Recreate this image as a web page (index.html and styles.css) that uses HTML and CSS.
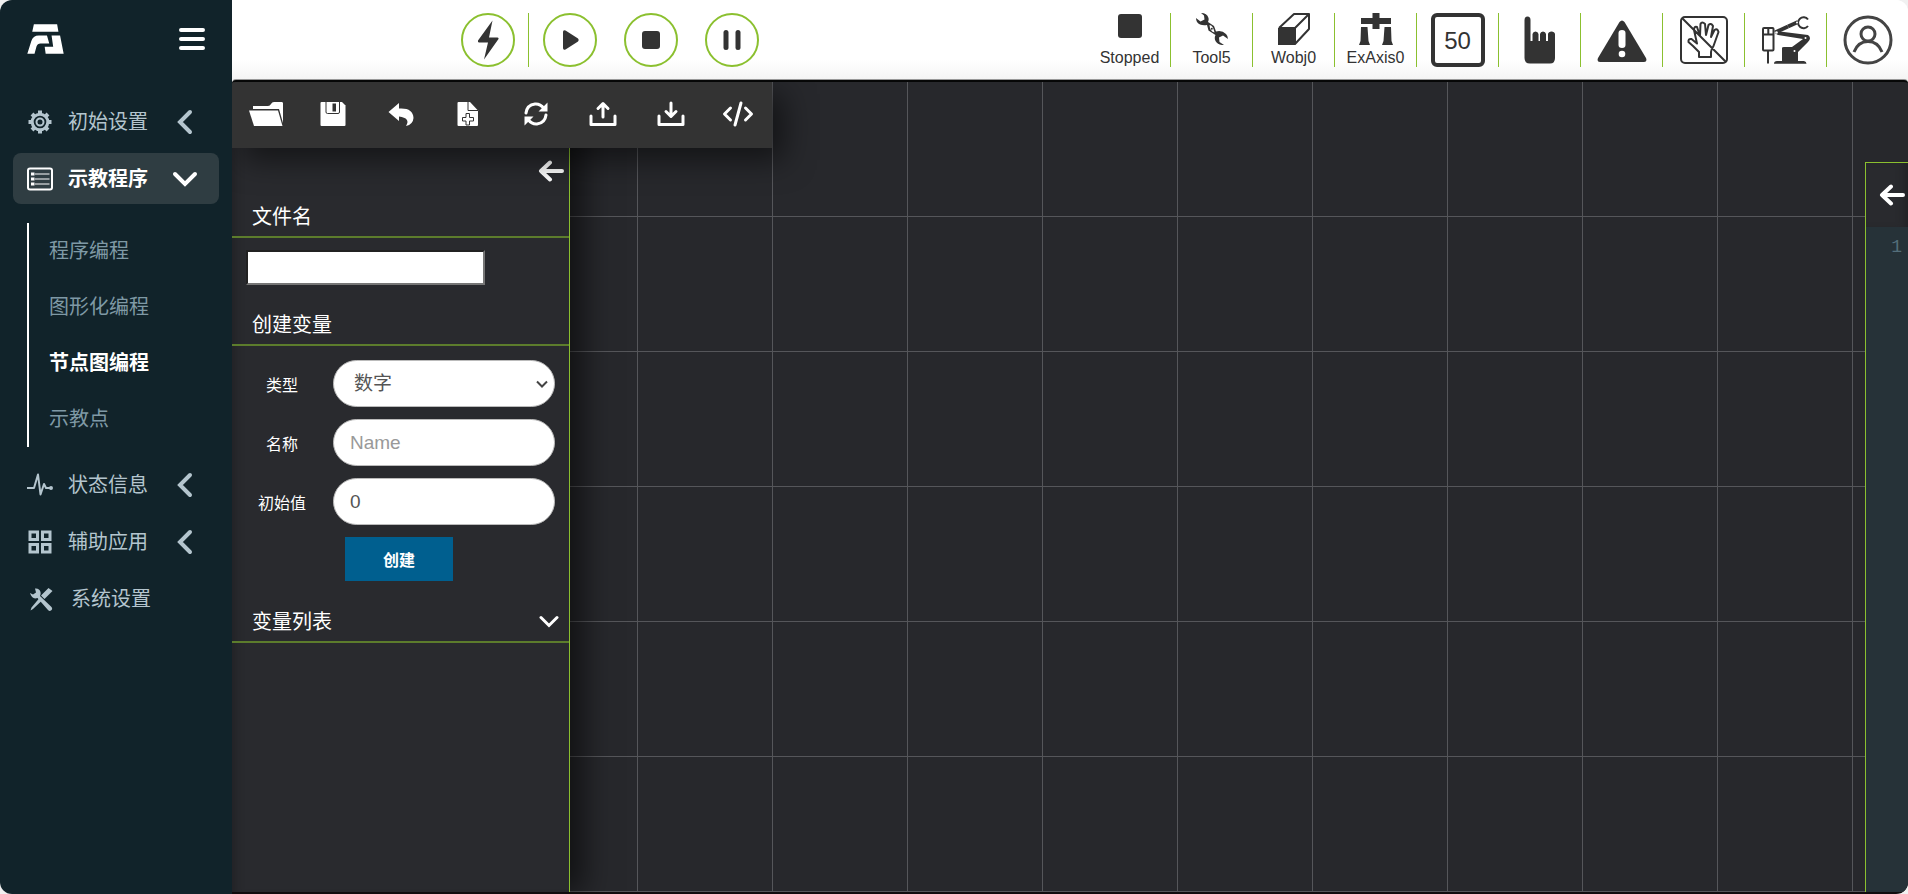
FILE: index.html
```html
<!DOCTYPE html>
<html lang="zh-CN">
<head>
<meta charset="utf-8">
<title>节点图编程</title>
<link rel="stylesheet" href="styles.css">
</head>
<body>
<div class="app">
  <aside class="sidebar">
    <div class="brand">
      <svg class="logo" viewBox="80 72 113 90"><path d="M101 72H172L176 95H96ZM81 162L93 124Q98 106 116 106H141L148 131H121Q112 131 109 140L103 162ZM155 106H181L192 162H137L134 141H160Z"/></svg>
      <button class="menu-toggle" aria-label="菜单"><svg viewBox="0 0 26 22"><path d="M2 2H24M2 11H24M2 20H24"/></svg></button>
    </div>
    <nav class="nav">
      <a class="item" href="#">
        <svg class="item-icon" viewBox="0 0 26 26"><circle class="rim" cx="13" cy="13" r="7.800"/><circle cx="13" cy="13" r="3.500"/><path class="teeth" d="M13 1.500V5M13 21V24.500M1.500 13H5M21 13H24.500M5 5L7.400 7.400M18.600 18.600L21 21M5 21L7.400 18.600M18.600 7.400L21 5"/></svg>
        <span>初始设置</span><svg class="chev" viewBox="0 0 26 26"><path d="M18 3L8 13L18 23"/></svg></a>
      <a class="item active" href="#">
        <svg class="item-icon" viewBox="0 0 26 26"><rect x="1" y="2.500" width="24" height="21" rx="2"/><path class="thin" d="M8 8H22.500M8 13H22.500M8 18H22.500"/><path class="dots" d="M4 8H7.500M4 13H7.500M4 18H7.500"/></svg>
        <span>示教程序</span><svg class="chev" viewBox="0 0 26 26"><path d="M3 8L13 18L23 8"/></svg></a>
      <div class="subnav">
        <a href="#">程序编程</a><a href="#">图形化编程</a><a class="current" href="#">节点图编程</a><a href="#">示教点</a>
      </div>
      <a class="item" href="#">
        <svg class="item-icon" viewBox="0 0 26 26"><path class="pulse" d="M0 16H7L11 2.500L13.500 22.500L17 12L19 16H23"/><circle cx="24" cy="16" r="1"/></svg>
        <span>状态信息</span><svg class="chev" viewBox="0 0 26 26"><path d="M18 3L8 13L18 23"/></svg></a>
      <a class="item" href="#">
        <svg class="item-icon bold" viewBox="0 0 26 26"><path d="M3 3H10.500V10.500H3ZM15.500 3H23V10.500H15.500ZM3 15.500H10.500V23H3ZM15.500 15.500H23V23H15.500Z"/></svg>
        <span>辅助应用</span><svg class="chev" viewBox="0 0 26 26"><path d="M18 3L8 13L18 23"/></svg></a>
      <a class="item" href="#">
        <svg class="item-icon solid" viewBox="0 0 26 26"><path d="M3 7L6 8.500L9 6.500L8 2.500Q12.500 2 13.500 6Q14 8 13 10L24.500 21Q26 23 24 24.500Q22.500 25.500 21 24L10.500 12Q5 14 3 7Z"/><path d="M21.500 2L25.500 5L17.500 13L14 9.500ZM12 12.500L14.500 15L6 23L3.500 24.500L4.500 21.500Z"/></svg>
        <span class="shift">系统设置</span></a>
    </nav>
  </aside>
  <main class="main">
    <header class="topbar">
      <div class="run">
        <div class="power"><button class="round" aria-label="使能"><svg width="24" height="40" viewBox="0 0 24 40"><path d="M16.500 .5L2 20.500Q1.500 22.500 3 22.500H12L8 39.500L22.500 19Q23 17.500 21.500 17.500H13Z"/></svg></button></div>
        <button class="round" aria-label="运行"><svg width="20" height="22" viewBox="0 0 20 22"><path d="M3 3Q3 .5 5.500 1.500L18 9.500Q19.500 11 18 12.500L5.500 20.500Q3 21.500 3 19Z"/></svg></button>
        <button class="round" aria-label="停止"><svg width="18" height="18" viewBox="0 0 18 18"><rect width="18" height="18" rx="3"/></svg></button>
        <button class="round" aria-label="暂停"><svg width="18" height="20" viewBox="0 0 18 20"><rect x="0.500" width="5" height="20" rx="2.500"/><rect x="12.500" width="5" height="20" rx="2.500"/></svg></button>
      </div>
      <div class="status">
        <button class="cell"><svg width="32" height="32" viewBox="0 0 32 32"><rect x="4" y="1" width="24" height="24" rx="3"/></svg><span>Stopped</span></button>
        <button class="cell"><svg width="32" height="32" viewBox="0 0 32 32"><path d="M5 0Q11 0 12.500 5Q13 7 12 9L18 13L20 18.500Q26 17 30 21Q32 23 32 26L27 22.500L23 24.500L23.500 29L28 32Q22 32.500 19.500 28Q18 25 19.500 22L12.500 17.500L11 12Q4 13 1 9Q0 7 0 5L4.500 8.500L8.500 6.500L8 2.500Z"/><path class="paper" d="M13.500 12Q17 12 18.500 19.500Q14 19 13.500 12Z"/><circle cx="15.800" cy="15.800" r="1"/></svg><span>Tool5</span></button>
        <button class="cell"><svg width="32" height="32" viewBox="0 0 32 32"><path d="M0 15H17V32H0Z"/><path class="line" d="M1 15L16 1H31L17 15H1M31 1V16L17 31V15"/></svg><span>Wobj0</span></button>
        <button class="cell"><svg width="34" height="32" viewBox="0 0 34 32"><path d="M2 5H13.500V0H20.500V5H32V11H20.500V16H13.500V11H2ZM2 14H8.500L9.500 28L11 32H0L1.500 28ZM25.500 14H32L32.500 28L34 32H23L24.500 28Z"/></svg><span>ExAxis0</span></button>
        <button class="cell"><b class="speed">50</b></button>
        <button class="cell" aria-label="拖动"><svg width="32" height="48" viewBox="0 0 32 48"><path d="M.5 4Q.5 .5 3.500 .5T6.500 4V25H8.500V18Q9 15.500 11.500 15.500T14.500 18V25H16V18Q16.500 15.500 19 15.500T22 18V25H24V18Q24.500 15.500 27.500 15.500T31 18V42Q31 47.500 26 47.500H6Q.5 47.500 .5 42Z"/></svg></button>
        <button class="cell" aria-label="警告"><svg class="warning" width="50" height="42" viewBox="0 0 50 42"><path d="M22.500 2Q25-1 27.500 2L49 38Q50.500 42 47 42H3Q-.5 42 1 38Z"/><path class="paper" d="M21.500 13Q21.500 10 25 10T28.500 13V25Q28.500 28 25 28T21.500 25Z"/><circle class="paper" cx="25" cy="34" r="3.300"/></svg></button>
        <button class="cell" aria-label="手动"><svg width="50" height="50" viewBox="0 0 50 50"><rect class="line" x="2" y="2" width="46" height="46" rx="4"/><path class="line" d="M3 3L47 47M20 42V37L14 31L9.500 27Q9 23.500 12.500 24L18 28.500L15 15Q15 11 18 12L21 21L21.500 9Q23 6 26 9L27 20L29.500 10Q32 7.500 34 11L32 22L35.500 15Q38.500 13 39.500 17L34.500 31Q32 35 32 37V42Z"/></svg></button>
        <button class="cell" aria-label="机器人"><svg width="50" height="50" viewBox="-1 -1 50 50"><rect class="line" x="1" y="12" width="10.500" height="22.500" rx="1"/><path class="line" d="M1 18.500H11.500M6.300 12V18.500M6 34.500V47.500M46 3.500A5.500 5.500 0 1 0 46 10"/><path d="M20 32Q20 31 22 31H30L41 23L16 19Q13 18 14 15L46 19Q50 22 46 26L36 36V45H42Q44.500 45.500 44.500 47.700H12Q12 45 15 45H20Z"/><path class="heavy" d="M13 16.500L26 10.500"/><path class="heavy" d="M26 10.500L36 6"/><circle class="paper" cx="35" cy="6.500" r="1"/><circle class="paper" cx="43.500" cy="22" r="1"/><circle class="paper" cx="32.500" cy="35" r="1"/><circle class="paper" cx="14.500" cy="16.500" r="1.300"/></svg></button>
        <button class="cell" aria-label="用户"><svg width="50" height="50" viewBox="0 0 50 50"><g class="user"><circle cx="25" cy="25" r="23"/><circle cx="25" cy="19" r="7"/><path d="M11 37Q15 26.500 25 26.500T39 37"/></g></svg></button>
      </div>
    </header>
    <section class="canvas">
      <div class="panel">
        <div class="panel-head"><button class="arrow" aria-label="收起"><svg viewBox="0 0 26 22"><path d="M24 11H4M12 2.500L3 11L12 19.500"/></svg></button></div>
        <h2><label for="file">文件名</label></h2>
        <div class="file"><input id="file" type="text"></div>
        <h2>创建变量</h2>
        <form class="form">
          <label for="type">类型</label>
          <div class="pick"><select id="type" class="field"><option>数字</option></select><svg viewBox="0 0 12 8"><path d="M1 1.500L6 6.500L11 1.500"/></svg></div>
          <label for="name">名称</label><input id="name" class="field" type="text" placeholder="Name">
          <label for="value">初始值</label><input id="value" class="field" type="text" value="0">
          <button type="button" class="create">创建</button>
        </form>
        <h2>变量列表<button class="fold" aria-label="展开"><svg viewBox="0 0 20 14"><path d="M2 2.500L10 10.500L18 2.500"/></svg></button></h2>
      </div>
      <div class="toolbar">
        <button aria-label="打开"><svg width="36" height="26" viewBox="0 0 36 26"><path d="M5 9V5H20Q22 5 23 3Q24 1 26 1H34Q35 1 35 2.500V22L31 8H5Z"/><path d="M1 9.500H30L34.500 25H6Z"/></svg></button>
        <button aria-label="保存"><svg width="26" height="26" viewBox="0 0 26 26"><path d="M.5 2Q.5 1 1.500 1H22L25.500 4.500V24Q25.500 25 24.500 25H1.500Q.5 25 .5 24Z"/><path class="cut" d="M6 1V11Q6 12.500 7.500 12.500H18Q19.500 12.500 19.500 11V1"/><path class="hole" d="M12.500 2.500H16V10.500H12.500Z"/></svg></button>
        <button aria-label="撤销"><svg width="26" height="26" viewBox="0 0 26 26"><path d="M.5 11L11 2V7.500Q25 6.500 25.500 17Q25 23.500 18 25Q23 17 11 15.500V20Z"/></svg></button>
        <button aria-label="新建"><svg width="22" height="26" viewBox="0 0 22 26"><path d="M.5 2Q.5 1 1.500 1H13L21 9.500V24Q21 25 20 25H1.500Q.5 25 .5 24Z"/><path class="cut" d="M11 1V9.500H21M9 12.500H12.500V16.500H16.500V20H12.500V24H9V20H5.500V16.500H9Z"/></svg></button>
        <button aria-label="刷新"><svg width="26" height="26" viewBox="0 0 26 26"><path class="stroke" d="M3 12Q4 4 12 3Q17 2.500 21 7.500M23 14Q22 22 14 23Q9 23.500 5 18.500"/><path d="M24.500 1.500V10.500H15.500ZM1.500 24.500V15.500H10.500Z"/></svg></button>
        <button aria-label="上传"><svg width="28" height="26" viewBox="0 0 28 26"><path class="stroke" d="M2 15V23.500H26V15M14 16V4M9 7.500L14 2.500L19 7.500"/></svg></button>
        <button aria-label="下载"><svg width="28" height="26" viewBox="0 0 28 26"><path class="stroke" d="M2 15V23.500H26V15M14 2V14M9 10.500L14 15.500L19 10.500"/></svg></button>
        <button aria-label="代码"><svg width="32" height="26" viewBox="0 0 32 26"><path class="stroke" d="M8.500 7L2.500 13L8.500 19M23.500 7L29.500 13L23.500 19M19 2L13 24"/></svg></button>
      </div>
      <div class="code">
        <div class="code-head"><button class="arrow" aria-label="展开代码"><svg viewBox="0 0 26 22"><path d="M24 11H4M12 2.500L3 11L12 19.500"/></svg></button></div>
        <div class="code-body">1</div>
      </div>
    </section>
  </main>
</div>
</body>
</html>
```

FILE: styles.css
```css
* { box-sizing: border-box; }
body { margin: 0; background: #f1f1f1; font-family: "Liberation Sans", "Noto Sans CJK SC", sans-serif; }
button { padding: 0; border: 0; background: none; font: inherit; color: inherit; }
svg { display: block; flex: none; }
a { color: inherit; text-decoration: none; }
.app { display: flex; height: 100vh; border-radius: 12px; overflow: hidden; background: #fff; }

.sidebar { width: 232px; flex: none; background: #11232a; color: #b4c5ce; font-size: 20px; }
.brand { display: flex; justify-content: space-between; align-items: center; height: 78px; padding: 0 27px; }
.logo { width: 37px; height: 30px; fill: #fff; }
.menu-toggle svg { width: 26px; height: 22px; stroke: #fff; stroke-width: 4; stroke-linecap: round; }
.nav { display: flex; flex-direction: column; gap: 6px; padding: 18px 13px; }
.item { display: flex; align-items: center; height: 51px; padding: 0 21px 0 14px; border-radius: 8px; }
.item span { flex: 1; padding-left: 15px; line-height: 28px; white-space: nowrap; }
.item .shift { padding-left: 18px; }
.item-icon { width: 26px; height: 26px; fill: none; stroke: currentColor; stroke-width: 2; }
.item-icon .rim { stroke-width: 3; }
.item-icon .teeth { stroke-width: 4; }
.item-icon .thin { stroke-width: 1; }
.item-icon .dots { stroke-width: 3; }
.item-icon .pulse { stroke-width: 2; stroke-linejoin: round; }
.item-icon.bold { stroke-width: 3; }
.item-icon.solid { fill: currentColor; stroke: none; }
.chev { width: 26px; height: 26px; fill: none; stroke: currentColor; stroke-width: 4; stroke-linecap: round; }
.active { background: #2f3d42; color: #fff; font-weight: bold; }
.subnav { display: flex; flex-direction: column; margin: 13px 0 6px 14px; border-left: 2px solid #fff; color: #7f99a5; }
.subnav a { padding-left: 20px; height: 56px; line-height: 56px; }
.subnav .current { color: #fff; font-weight: bold; }

.main { flex: 1; min-width: 0; display: flex; flex-direction: column; }
.topbar { display: flex; justify-content: space-between; align-items: center; height: 80px; padding-left: 229px; background: linear-gradient(#fff 60px, #f4f4f4); color: #333; }
.topbar svg { fill: #333; }
.topbar .line { fill: none; stroke: #333; stroke-width: 2; stroke-linejoin: round; }
.topbar .heavy { stroke: #333; stroke-width: 4; }
.topbar .paper { fill: #fff; }
.topbar .user { fill: none; stroke: #444; stroke-width: 3; }
.run { display: flex; gap: 27px; }
.power { padding-right: 13px; margin-right: -13px; border-right: 1px solid #8bc02f; }
.round { display: flex; align-items: center; justify-content: center; width: 54px; height: 54px; border: 2px solid #8bc02f; border-radius: 50%; background: #fff; }
.status { display: flex; }
.cell { display: flex; flex-direction: column; align-items: center; justify-content: center; width: 82px; height: 54px; border-right: 1px solid #8bc02f; font-size: 16px; line-height: 18px; }
.cell span { padding-top: 4px; }
.cell:last-child { width: 81px; border: 0; }
.warning { margin-top: 2px; }
.speed { width: 54px; height: 54px; border: 4px solid #333; border-radius: 6px; font-size: 24px; font-weight: normal; line-height: 48px; }

.canvas { position: relative; flex: 1; overflow: hidden; border-top: 2px solid #060707; border-bottom: 2px solid #100c0e; border-radius: 4px 4px 0 0; box-shadow: 0 -1px 0 #999; background-color: #27282c; background-image: linear-gradient(90deg, #55565a 1px, transparent 1px), linear-gradient(#55565a 1px, transparent 1px); background-size: 135px 135px; background-position: 0 -1px; }
.toolbar { position: absolute; left: 0; top: 0; display: flex; width: 540px; height: 66px; padding-bottom: 2px; background: #333; box-shadow: 12px 12px 30px rgba(0, 0, 0, .5); }
.toolbar button { flex: 1; display: flex; align-items: center; justify-content: center; }
.toolbar svg { fill: #fff; }
.toolbar .stroke { fill: none; stroke: #fff; stroke-width: 3; stroke-linejoin: round; stroke-linecap: round; }
.toolbar .cut { fill: none; stroke: #333; }
.toolbar .hole { fill: #333; }

.panel { position: absolute; left: 0; top: 0; bottom: -2px; width: 338px; padding-top: 66px; border-right: 1px solid #8bc02f; background: #292a2e; box-shadow: 12px 0 30px rgba(0, 0, 0, .6), inset 8px 0 10px -6px #202024; color: #fff; }
.panel-head { display: flex; justify-content: flex-end; height: 46px; padding: 12px 5px; }
.arrow svg { width: 26px; height: 22px; fill: none; stroke: #fff; stroke-width: 4; stroke-linecap: round; stroke-linejoin: round; }
.panel h2 { display: flex; align-items: center; justify-content: space-between; height: 44px; margin: 0; padding: 3px 10px 0 20px; border-bottom: 2px solid #5c7c2c; font-size: 20px; line-height: 28px; font-weight: normal; }
.file { padding: 12px 14px 17px; }
.file input { display: block; width: 239px; height: 35px; border: 2px inset #767676; background: #fff; font-size: 18px; }
.form { display: grid; grid-template-columns: 100px 1fr; gap: 12px 1px; align-items: center; padding: 14px 14px 18px 0; font-size: 16px; }
.form label { text-align: center; }
.field { display: block; width: 100%; height: 47px; padding: 0 16px; border: 1px solid #bbb; border-radius: 24px; background: #fff; color: #555; font-family: inherit; font-size: 19px; appearance: none; }
.field::placeholder { color: #999; }
.pick { position: relative; }
.pick .field { padding-left: 20px; }
.pick svg { position: absolute; right: 7px; top: 20px; width: 12px; height: 8px; fill: none; stroke: #444; stroke-width: 2; }
.create { grid-column: 2; width: 108px; height: 44px; margin-left: 12px; background: #005f8f; font-weight: bold; }
.fold svg { width: 20px; height: 14px; fill: none; stroke: #fff; stroke-width: 3; stroke-linecap: round; }

.code { position: absolute; right: 0; top: 80px; bottom: -2px; width: 43px; display: flex; flex-direction: column; border: 1px solid #8bc02f; border-width: 1px 0 0 1px; background: #292a2e; }
.code-head { display: flex; align-items: center; justify-content: flex-end; height: 64px; padding-right: 3px; box-shadow: inset -8px 0 10px -6px #202024; }
.code-body { flex: 1; padding: 8px 6px 0 0; background: #263238; color: #546e7a; font: 18px/24px "Liberation Mono", monospace; text-align: right; }
```
